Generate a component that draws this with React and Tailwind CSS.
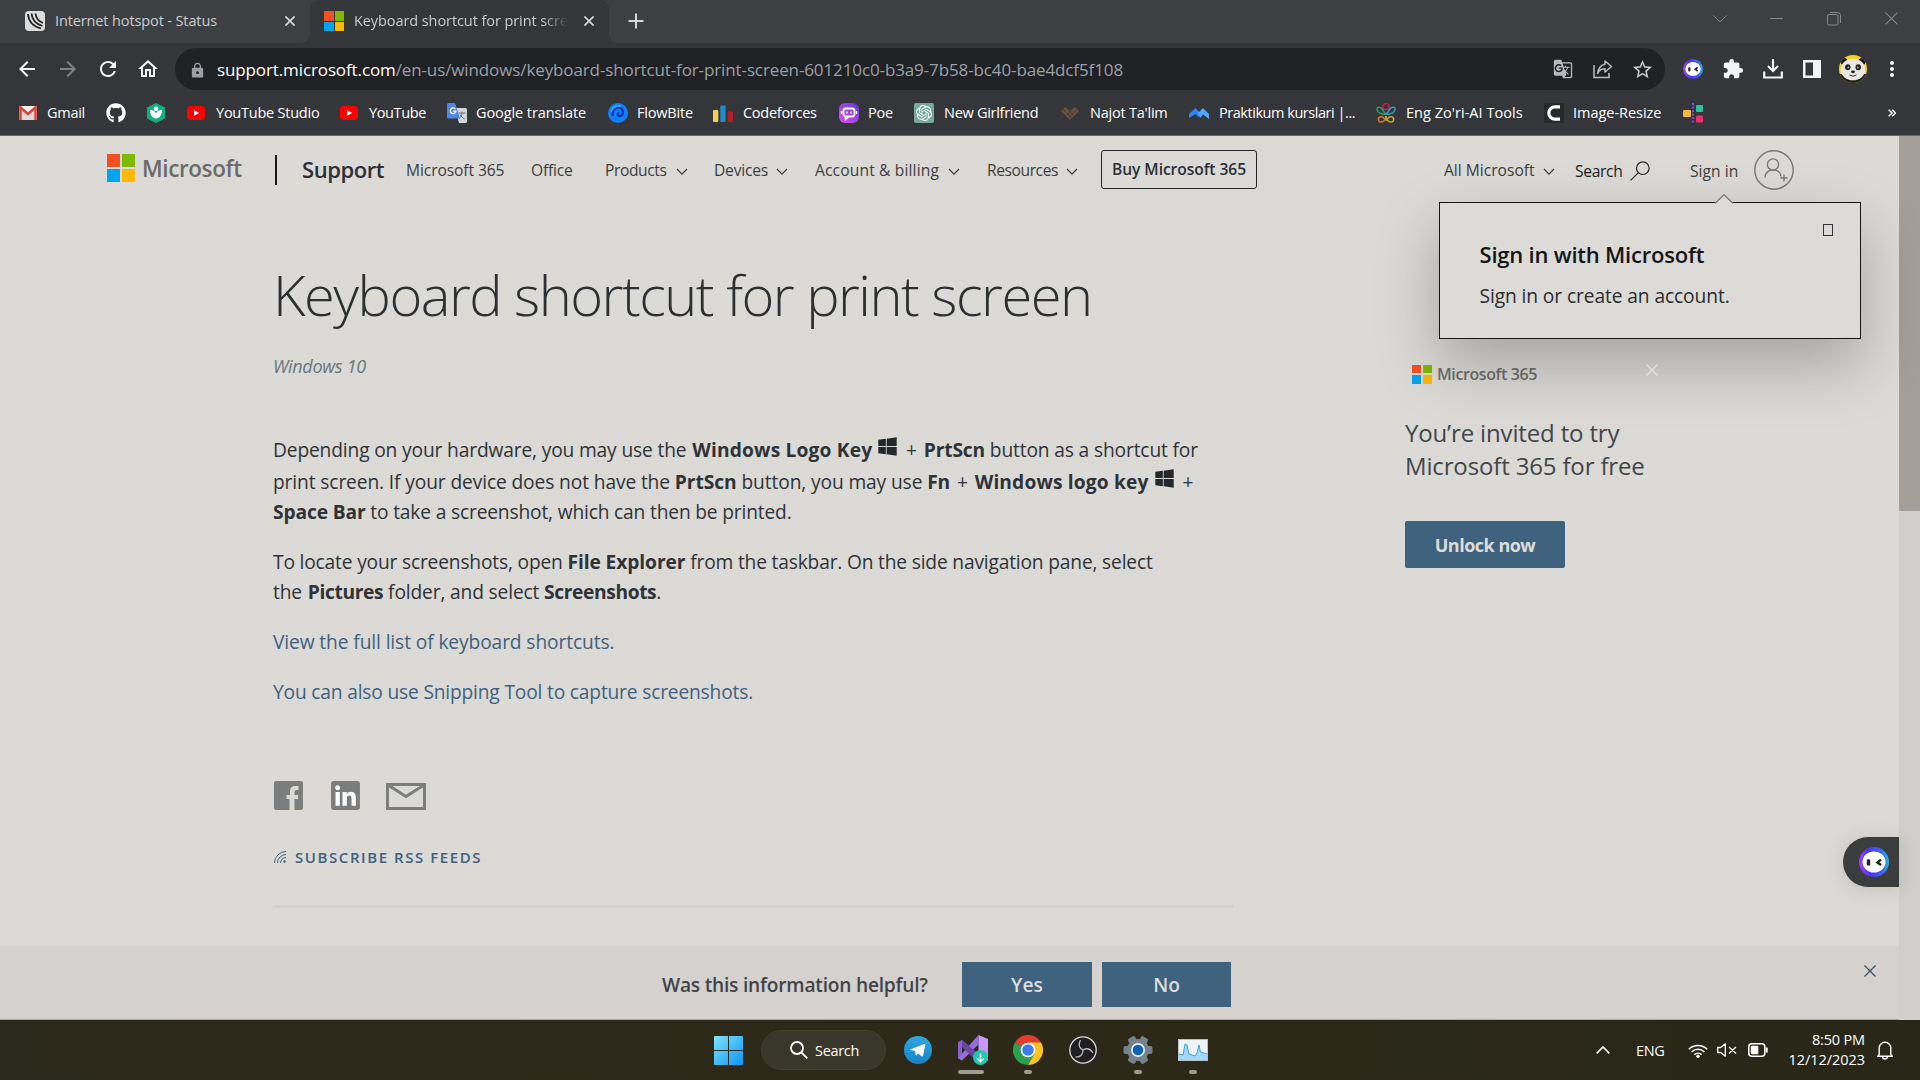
import React from "react";
import {
  MdArrowBack,
  MdArrowForward,
  MdRefresh,
  MdOutlineHome,
  MdLock,
  MdStarBorder,
  MdExtension,
  MdMoreVert,
  MdGTranslate,
} from "react-icons/md";
import { FaGithub, FaWindows, FaLinkedin } from "react-icons/fa";
import { SiOpenai } from "react-icons/si";

function Cross({ className, w = 1 }) {
  return (
    <svg viewBox="0 0 12 12" className={className} fill="none" stroke="currentColor" strokeWidth={w}>
      <path d="M.5 .5l11 11M11.5 .5l-11 11" />
    </svg>
  );
}

function Chevron({ className }) {
  return (
    <svg viewBox="0 0 12 8" className={className} fill="none" stroke="currentColor" strokeWidth="1.2">
      <path d="M1 1l5 5.2L11 1" />
    </svg>
  );
}

function MsSquares({ className }) {
  return (
    <div className={className}>
      <span className="bg-[#f4511f]" />
      <span className="bg-[#7fba00]" />
      <span className="bg-[#00a4ef]" />
      <span className="bg-[#ffb900]" />
    </div>
  );
}

function BotFace({ className, id }) {
  return (
    <svg viewBox="0 0 30 30" className={className}>
      <defs>
        <linearGradient id={id} x1="0" y1=".6" x2="1" y2=".5">
          <stop offset="0" stopColor="#a044f5" />
          <stop offset=".35" stopColor="#4a35f0" />
          <stop offset=".75" stopColor="#3b62f5" />
          <stop offset="1" stopColor="#25b4dc" />
        </linearGradient>
      </defs>
      <circle cx="15" cy="15" r="15" fill={`url(#${id})`} />
      <ellipse cx="15" cy="15" rx="11.5" ry="10.5" fill="#fff" />
      <rect x="7.8" y="12.2" width="3.4" height="6.4" rx="1.2" fill="#222" />
      <path d="M22 12.6l-3.6 2.8 3.6 2.6" fill="none" stroke="#222" strokeWidth="2.4" />
    </svg>
  );
}

/* ---------- Browser chrome ---------- */

function TabStrip() {
  return (
    <div className="flex h-[43px] bg-[#35363a] text-[14.5px] text-[#c9cbce]">
      <div className="flex h-full w-[310px] items-center rounded-br-[9px] bg-[#3c4043] pb-[1px] pl-[25px]">
        <svg viewBox="0 0 20 20" className="size-5">
          <rect width="20" height="20" rx="4" fill="#dcdcdc" />
          <path d="M3 3c.5 7 4 12 13 14.500M6.500 2.500c.5 6 3 10 11 12.500M10.500 2.500C11 7 12.500 10 18 12" fill="none" stroke="#222" strokeWidth="1.8" />
        </svg>
        <span className="ml-[10px] w-[230px] tracking-[-0.12px]">Internet hotspot - Status</span>
        <Cross className="size-[10px] text-[#d5d7da]" w={2} />
      </div>
      <div className="bg-[#3c4043]">
        <div className="flex h-full w-[299px] items-center rounded-t-[9px] bg-[#35363a] pb-[1px] pl-[14px]">
          <MsSquares className="grid size-5 grid-cols-2 gap-[1px]" />
          <span className="ml-[10px] w-[214px] overflow-hidden mask-r-from-[88%] mask-r-to-100% tracking-[-0.08px] whitespace-nowrap">
            Keyboard shortcut for print scre
          </span>
          <Cross className="ml-[16px] size-[10px] text-[#d5d7da]" w={2} />
        </div>
      </div>
      <div className="flex h-full grow items-center rounded-bl-[9px] bg-[#3c4043] pb-[1px] pl-[19px]">
        <svg viewBox="0 0 16 16" className="size-4 text-[#d5d7da]" stroke="currentColor" strokeWidth="2">
          <path d="M8 .5v15M.5 8h15" />
        </svg>
        <div className="ml-auto flex items-center pr-[22px] pb-[5px] text-[#85888b]">
          <svg viewBox="0 0 14 8" className="h-2 w-[14px]" fill="none" stroke="currentColor">
            <path d="M.5 .5L7 7 13.5 .5" />
          </svg>
          <span className="ml-[43px] h-px w-[13px] bg-current" />
          <svg viewBox="0 0 14 14" className="ml-[44px] size-[14px]" fill="none" stroke="currentColor">
            <rect x=".5" y="2.5" width="10.5" height="10.5" rx="1.5" />
            <path d="M3 .5h7.5a3 3 0 0 1 3 3V11" />
          </svg>
          <Cross className="ml-[44px] size-[13px]" />
        </div>
      </div>
    </div>
  );
}

function Panda() {
  return (
    <svg viewBox="0 0 28 28" className="size-7">
      <defs>
        <clipPath id="panda">
          <circle cx="14" cy="14" r="14" />
        </clipPath>
      </defs>
      <g clipPath="url(#panda)">
        <rect width="28" height="28" fill="#f7cf1d" />
        <rect y="19" width="28" height="9" fill="#20211f" />
        <circle cx="5" cy="6.500" r="3.500" fill="#1b1b1b" />
        <circle cx="23" cy="6.500" r="3.500" fill="#1b1b1b" />
        <ellipse cx="14" cy="14.500" rx="12.300" ry="10.800" fill="#e9e8e2" />
        <ellipse cx="8.800" cy="12.300" rx="2.700" ry="3" fill="#232323" />
        <ellipse cx="19.200" cy="12.300" rx="2.700" ry="3" fill="#232323" />
        <circle cx="9.300" cy="12.600" r="1" fill="#7fb58b" />
        <circle cx="18.700" cy="12.600" r="1" fill="#7fb58b" />
        <ellipse cx="14" cy="16.800" rx="2" ry="1.400" fill="#222" />
        <path d="M10.500 20q3.500 2.400 7 0" fill="none" stroke="#333" />
      </g>
    </svg>
  );
}

function Toolbar() {
  return (
    <div className="flex h-[52px] items-center bg-[#35363a] text-[#f1f3f4]">
      <MdArrowBack className="ml-[15px] size-6" />
      <MdArrowForward className="ml-[17px] size-6 text-[#7f8184]" />
      <MdRefresh className="ml-4 size-6" />
      <MdOutlineHome className="ml-4 size-6" />
      <div className="ml-[15px] flex h-[42px] w-[1490px] items-center rounded-full bg-[#202124] pl-[14px] text-[17px] text-[#9aa0a6]">
        <MdLock className="mt-[2px] size-[17px]" />
        <span className="mt-[2px] ml-[11px] grow tracking-[-0.115px]">
          <span className="text-white">support.microsoft.com</span>
          /en-us/windows/keyboard-shortcut-for-print-screen-601210c0-b3a9-7b58-bc40-bae4dcf5f108
        </span>
        <MdGTranslate className="size-5 text-[#b6b9bd]" />
        <svg viewBox="0 0 20 20" className="ml-5 size-5" fill="none" stroke="#b6b9bd" strokeWidth="1.6">
          <path d="M1 6v12.5h15V14" />
          <path d="M12 2l6.500 5.500L12 13v-3.200C8.500 9.800 6 11.500 4.700 14.500 5 9.500 8 5.700 12 5.200z" strokeLinejoin="round" />
        </svg>
        <MdStarBorder className="mr-[11px] ml-[18px] size-[23px] text-[#c6c9cc]" />
      </div>
      <BotFace id="botbar" className="ml-[18px] size-5" />
      <MdExtension className="ml-[19px] size-[22px]" />
      <svg viewBox="0 0 20 20" className="ml-[19px] size-5" fill="none" stroke="currentColor" strokeWidth="2.200">
        <path d="M10 0v11M5 7l5 5 5-5M1.200 12.500v6h17.600v-6" />
      </svg>
      <svg viewBox="0 0 18 18" className="ml-5 size-[18px]">
        <path fillRule="evenodd" d="M0 0h18v18H0zM2.500 2.500v13h7.500v-13z" fill="currentColor" />
      </svg>
      <span className="ml-[18px]">
        <Panda />
      </span>
      <MdMoreVert className="ml-[13px] size-6" />
    </div>
  );
}

function YouTube() {
  return (
    <svg viewBox="0 0 18 14" className="h-[14px] w-[18px]">
      <rect width="18" height="14" rx="3.500" fill="#f00" />
      <path d="M7 4.200L12.200 7 7 9.800z" fill="#fff" />
    </svg>
  );
}

const bookmarks = [
  {
    label: "Gmail",
    box: "w-[87px]",
    text: "-ml-[1px] tracking-[-0.27px]",
    icon: (
      <svg viewBox="0 0 18 14" className="h-[14px] w-[18px]">
        <rect width="18" height="14" rx="1" fill="#f1f1f1" />
        <path d="M3 14V5l6 4.500L15 5v9" fill="#dcdcdc" />
        <path d="M1.500 14V1.500L9 8l7.500-6.500V14" fill="none" stroke="#e0443a" strokeWidth="2.600" />
      </svg>
    ),
  },
  { label: "", box: "w-[41px]", text: "", icon: <FaGithub className="size-5 text-white" /> },
  {
    label: "",
    box: "w-[40px]",
    text: "",
    icon: (
      <svg viewBox="0 0 18 20" className="h-5 w-[18px]">
        <path d="M9 0l9 4.500v11L9 20 0 15.500v-11z" fill="#10b081" />
        <circle cx="9" cy="5.700" r="2.300" fill="#fff" />
        <path d="M3 7c3 0 5 1 6 3.500C10 8 12 7 15 7c0 5-2.500 8-6 8.500C5.500 15 3 12 3 7z" fill="#fff" />
      </svg>
    ),
  },
  { label: "YouTube Studio", box: "w-[153px]", text: "tracking-[-0.23px]", icon: <YouTube /> },
  { label: "YouTube", box: "w-[107px]", text: "tracking-[-0.38px]", icon: <YouTube /> },
  {
    label: "Google translate",
    box: "w-[161px]",
    text: "tracking-[-0.08px]",
    icon: (
      <svg viewBox="0 0 20 20" className="size-5">
        <path d="M8 5h10.500A1.500 1.500 0 0 1 20 6.500v12a1.500 1.500 0 0 1-1.500 1.500H12z" fill="#d3d5d8" />
        <path d="M11.500 10h7M15 8.500V10c0 2.500-1.500 4.500-3 5.500M13 11.500c.8 2 3 3.500 4.800 4.500" fill="none" stroke="#6c7780" />
        <path d="M1.500 0H8l5 15.500H1.500A1.500 1.500 0 0 1 0 14V1.500A1.500 1.500 0 0 1 1.500 0z" fill="#4f86ec" />
        <path d="M8.300 6a2.800 2.800 0 1 0 .6 2.200H6.300" fill="none" stroke="#fff" strokeWidth="1.300" />
      </svg>
    ),
  },
  {
    label: "FlowBite",
    box: "w-[105px]",
    text: "tracking-[-0.2px]",
    icon: (
      <svg viewBox="0 0 20 20" className="size-5">
        <circle cx="10" cy="10" r="10" fill="#1080f8" />
        <path d="M5 13c-2-6 4-10 8-7.500 3 2 2.500 7-1 7.500-2.500.3-3-2.500-1-3.500" fill="none" stroke="#1237b5" strokeWidth="2.400" />
        <path d="M3 9c1-5 6-7 10-6" fill="none" stroke="#35b0ff" strokeWidth="1.500" />
      </svg>
    ),
  },
  {
    label: "Codeforces",
    box: "w-[126px]",
    text: "ml-[1px] tracking-[-0.27px]",
    icon: (
      <svg viewBox="0 0 20 20" className="size-5">
        <rect y="7" width="5.300" height="12" rx="1" fill="#f7cf52" />
        <rect x="7.300" y="2.500" width="5.300" height="16.500" rx="1" fill="#1e8bcd" />
        <rect x="14.700" y="8.500" width="5.300" height="10.500" rx="1" fill="#b41f29" />
      </svg>
    ),
  },
  {
    label: "Poe",
    box: "w-[75px]",
    text: "tracking-[-0.27px]",
    icon: (
      <svg viewBox="0 0 20 20" className="size-5">
        <defs>
          <linearGradient id="poe" x1="0" y1="1" x2="1" y2="0">
            <stop offset="0" stopColor="#e64cf2" />
            <stop offset="1" stopColor="#5a3bd0" />
          </linearGradient>
        </defs>
        <rect width="20" height="20" rx="6" fill="url(#poe)" />
        <rect x="4.500" y="5.500" width="11" height="8" rx="2.500" fill="none" stroke="#fff" strokeWidth="1.800" />
        <path d="M2.500 8v3M17.500 8v3M8 8.500v2M12 8.500v2M6.500 14v2.500l3-2.500" stroke="#fff" strokeWidth="1.400" fill="none" />
      </svg>
    ),
  },
  {
    label: "New Girlfriend",
    box: "w-[146px]",
    text: "ml-[1px] tracking-[-0.28px]",
    icon: (
      <span className="flex size-5 items-center justify-center rounded-[2px] bg-[#74aa9c] text-white">
        <SiOpenai className="size-4" />
      </span>
    ),
  },
  {
    label: "Najot Ta'lim",
    box: "w-[129px]",
    text: "ml-[1px] tracking-[-0.23px]",
    icon: (
      <svg viewBox="0 0 20 20" className="size-5">
        <path d="M1 8l4-4 5 3.500L15 4l4 4-9 9z" fill="#6b5140" />
        <path d="M3 6l8.500 9M7 5.500l6.500 7M17 6l-8.500 9M13 5.500l-6.500 7" stroke="#3f3a38" strokeWidth=".9" />
      </svg>
    ),
  },
  {
    label: "Praktikum kurslari |...",
    box: "w-[187px]",
    text: "ml-[1px] tracking-[-0.46px]",
    icon: (
      <svg viewBox="0 0 20 20" className="size-5">
        <path d="M0 15V11l6.500-6 4 4.200V15L6.500 11z" fill="#2e86f5" />
        <path d="M9 10l5-5 6 6v5l-6-4.500-2.500 3.500z" fill="#51a5ff" />
      </svg>
    ),
  },
  {
    label: "Eng Zo'ri-AI Tools",
    box: "w-[168px]",
    text: "ml-[1px] tracking-[0.03px]",
    icon: (
      <svg viewBox="0 0 20 20" className="size-5" fill="none" strokeWidth="1.500">
        <ellipse cx="10" cy="3.600" rx="3.200" ry="3" stroke="#c4204b" />
        <path d="M10 11C7 12 1.500 10 1 6.500s4-2.500 5.500 0S8 10 10 11z" stroke="#2f9e6a" />
        <path d="M10 11c3 1 8.500-1 9-4.500s-4-2.500-5.500 0S12 10 10 11z" stroke="#2a9fc0" />
        <path d="M10 13c0 3-2 6-5 6s-3.500-4-1-5 3.500.5 6 3.500" stroke="#d9782a" />
        <path d="M10 13c0 3 2 6 5 6s3.500-4 1-5-3.500.5-6 3.500" stroke="#c8a72b" />
      </svg>
    ),
  },
  {
    label: "Image-Resize",
    box: "w-[139px]",
    text: "tracking-[-0.03px]",
    icon: (
      <svg viewBox="0 0 20 20" className="size-5">
        <rect width="20" height="20" fill="#292929" />
        <path d="M16 3.800h-5a6.200 6.200 0 0 0 0 12.400h5" fill="none" stroke="#fff" strokeWidth="3.200" />
      </svg>
    ),
  },
  {
    label: "",
    box: "w-[205px]",
    text: "",
    icon: (
      <svg viewBox="0 0 20 20" className="size-5">
        <rect y="7" width="8" height="7" rx="1" fill="#f5b73c" />
        <path d="M10 0v20" stroke="#6f4df0" strokeWidth="2" strokeDasharray="2 1.500" />
        <rect x="13" y="2" width="7" height="7" rx="1" fill="#27c4a0" />
        <rect x="13" y="12.500" width="7" height="7" rx="1" fill="#ee2f6e" />
      </svg>
    ),
  },
];

function Bookmarks() {
  return (
    <div className="flex h-[41px] items-center border-b border-[#67646a] bg-[#35363a] pb-[4px] pl-[19px] text-[14.5px] text-white">
      {bookmarks.map((b, i) => (
        <div key={i} className={`flex shrink-0 items-center gap-[9px] ${b.box}`}>
          <span className="flex w-5 shrink-0 items-center">{b.icon}</span>
          {b.label && <span className={`whitespace-nowrap ${b.text}`}>{b.label}</span>}
        </div>
      ))}
      <svg viewBox="0 0 8 8" className="size-2" fill="none" stroke="#fff" strokeWidth="1.500">
        <path d="M.7 .7L4 4 .7 7.300M4.200 .7L7.500 4 4.200 7.300" />
      </svg>
    </div>
  );
}

/* ---------- Site header ---------- */

function SiteHeader() {
  return (
    <header className="flex h-[68px] items-center pl-[107px] text-[15.6px] text-[#3d3d3f]">
      <MsSquares className="mb-1 grid size-7 grid-cols-2 gap-[1.5px]" />
      <span className="mb-[3px] ml-[7px] w-[133px] text-[22.5px] font-semibold tracking-[-0.4px] text-[#6b6b6b]">Microsoft</span>
      <span className="mr-[25px] h-[30px] w-[2px] bg-[#1c1c1c]" />
      <span className="mb-[2px] w-[104px] text-[22px] font-semibold tracking-[-0.44px] text-[#2c3036]">Support</span>
      <span className="mt-[2px] w-[125px] tracking-[-0.09px]">Microsoft 365</span>
      <span className="mt-[2px] w-[74px] tracking-[-0.23px]">Office</span>
      <span className="mt-[2px] flex w-[109px] items-center">
        <span className="w-[71px] tracking-[-0.39px]">Products</span>
        <Chevron className="mt-[3px] h-[8px] w-3" />
      </span>
      <span className="mt-[2px] flex w-[101px] items-center">
        <span className="w-[62px] tracking-[-0.21px]">Devices</span>
        <Chevron className="mt-[3px] h-[8px] w-3" />
      </span>
      <span className="mt-[2px] flex w-[172px] items-center">
        <span className="w-[133px] tracking-[0.14px]">Account &amp; billing</span>
        <Chevron className="mt-[3px] h-[8px] w-3" />
      </span>
      <span className="mt-[2px] flex w-[114px] items-center">
        <span className="w-[79px] tracking-[-0.42px]">Resources</span>
        <Chevron className="mt-[3px] h-[8px] w-3" />
      </span>
      <span className="mb-[1px] flex h-[39px] w-[156px] items-center justify-center rounded-[3px] border border-[#26282c] pt-[1px] font-semibold tracking-[-0.06px] text-[#2c3036]">
        Buy Microsoft 365
      </span>
      <span className="mt-[2px] ml-[187px] flex w-[131px] items-center">
        <span className="w-[99px]">All Microsoft</span>
        <Chevron className="mt-[3px] h-[8px] w-3" />
      </span>
      <span className="mt-[4px] w-[55px] tracking-[-0.32px] text-[#1d1d1f]">Search</span>
      <svg viewBox="0 0 20 20" className="mt-[1px] size-5" fill="none" stroke="#26282c" strokeWidth="1.200">
        <circle cx="12.800" cy="7.200" r="6.300" />
        <path d="M8.200 11.800L.6 19.400" />
      </svg>
      <span className="mt-[4px] ml-[40px] w-[64px] tracking-[0.05px]">Sign in</span>
      <svg viewBox="0 0 40 40" className="size-10" fill="none" stroke="#77787a" strokeWidth="1.400">
        <circle cx="20" cy="20" r="19.200" />
        <circle cx="19" cy="14.500" r="5.600" />
        <path d="M11 27.500c0-10 16-10 16-1M30 24.500v7M26.500 28h7" />
      </svg>
    </header>
  );
}

function SignInPopup() {
  return (
    <div className="absolute top-[66px] left-[1439px] h-[137px] w-[422px] border border-[#161616] bg-[#dcdbd7] pt-[39px] pl-[39.5px] shadow-[0_26px_62px_rgba(0,0,0,0.25)]">
      <svg viewBox="0 0 20 10" className="absolute -top-[9px] left-[274px] h-[10px] w-5">
        <path d="M1 9.500L10 .8l9 8.700z" fill="#dcdbd7" />
        <path d="M1 9.200L10 .8l9 8.400" fill="none" stroke="#77787a" strokeWidth="1.300" />
      </svg>
      <span className="absolute top-[21px] right-[27px] h-3 w-[10px] border border-[#33343a]" />
      <div className="h-[24px] text-[22px] leading-6 font-semibold tracking-[-0.22px] text-[#161618]">Sign in with Microsoft</div>
      <div className="mt-[18px] text-[19.2px] leading-6 tracking-[-0.1px] text-[#2b2c30]">Sign in or create an account.</div>
    </div>
  );
}

/* ---------- Article ---------- */

function WinKey() {
  return <FaWindows className="mr-[1px] mb-[10px] ml-[5px] inline-block size-[21px] align-middle text-[#24272b]" />;
}

function Plus() {
  return <span className="mx-[2px]">+</span>;
}

function Article() {
  return (
    <article className="w-[960px] pt-[55px] text-[19.2px] whitespace-nowrap text-[#2f3338]">
      <h1 className="h-[70px] text-[56px] leading-[70px] font-light tracking-[-1.49px] text-[#2c3033]">
        Keyboard shortcut for print screen
      </h1>
      <div className="mt-[24px] h-[26px] text-[18px] leading-[26px] tracking-[-0.3px] text-[#6b7780] italic">Windows 10</div>
      <div className="mt-[56px] leading-[30px]">
        <div className="h-8 tracking-[-0.15px]">
          Depending on your hardware, you may use the{" "}
          <b className="ml-[1px] font-bold tracking-[0.16px]">Windows Logo Key</b>
          <WinKey /> <Plus /> <b className="font-bold tracking-[-0.15px]">PrtScn</b> button as a shortcut for
        </div>
        <div className="h-[30px] tracking-[-0.12px]">
          print screen. If your device does not have the <b className="font-bold tracking-[-0.05px]">PrtScn</b> button, you may use{" "}
          <b className="font-bold">Fn</b> <Plus /> <b className="font-bold tracking-[0.14px]">Windows logo key</b>
          <WinKey /> <Plus />
        </div>
        <div className="h-[30px] tracking-[-0.17px]">
          <b className="font-bold tracking-[-0.13px]">Space Bar</b> to take a screenshot, which can then be printed.
        </div>
        <div className="mt-5 h-[30px] tracking-[-0.18px]">
          To locate your screenshots, open <b className="font-bold tracking-[-0.08px]">File Explorer</b> from the taskbar. On the side
          navigation pane, select
        </div>
        <div className="h-[30px] tracking-[-0.15px]">
          the <b className="ml-[1px] font-bold tracking-[-0.35px]">Pictures</b> folder, and select{" "}
          <b className="font-bold tracking-[-0.38px]">Screenshots</b>.
        </div>
        <div className="mt-5 h-[30px] tracking-[-0.11px] text-[#42617f]">View the full list of keyboard shortcuts.</div>
        <div className="mt-5 h-[30px] tracking-[-0.18px] text-[#42617f]">
          You can also use Snipping Tool to capture screenshots.
        </div>
      </div>
      <div className="mt-[74px] flex h-[29px] items-center pl-[1px] text-[#7c7e7d]">
        <svg viewBox="0 0 29 29" className="size-[29px]">
          <path
            fill="currentColor"
            d="M2 0h25q2 0 2 2v25q0 2-2 2h-6.500V18h3.500v-4h-3.500v-3q0-2 2-2h2V5h-3.500q-5 0-5 5.500V14h-3.500v4H15.500v11H2q-2 0-2-2V2q0-2 2-2z"
          />
        </svg>
        <span className="ml-[28px] flex h-[29px] w-[29px] items-center justify-center overflow-hidden rounded-[2px] bg-[linear-gradient(#fff,#fff)] bg-[length:23px_23px] bg-center bg-no-repeat">
          <FaLinkedin className="size-[33px] shrink-0" />
        </span>
        <svg viewBox="0 0 40 27" className="mt-[2px] ml-[26px] h-[27px] w-10" fill="none" stroke="currentColor" strokeWidth="3">
          <path d="M1.500 1.500h37v24h-37z" />
          <path d="M2 2l18 11.500L38 2" />
        </svg>
      </div>
      <div className="mt-[37px] flex h-5 items-center text-[15px] font-semibold tracking-[1.57px] text-[#42617f]">
        <svg viewBox="0 0 12 12" className="mr-[9px] ml-[1px] size-3" fill="none" stroke="currentColor">
          <path d="M.5 12A11.500 11.500 0 0 1 12 .5M3.500 12A8.500 8.500 0 0 1 12 3.500M6.500 12A5.500 5.500 0 0 1 12 6.500" />
          <circle cx="10.500" cy="10.500" r="1.200" fill="currentColor" stroke="none" />
        </svg>
        SUBSCRIBE RSS FEEDS
      </div>
      <div className="mt-[38px] h-[3px] bg-[#d1d0cc]" />
    </article>
  );
}

function Promo() {
  return (
    <aside className="ml-[172px] pt-[160px]">
      <div className="flex h-5 w-[253px] items-center pl-[7px]">
        <MsSquares className="grid h-[19px] w-5 grid-cols-2 gap-[1.5px]" />
        <span className="ml-[5px] text-[16px] font-semibold tracking-[-0.4px] text-[#6e6e6d]">Microsoft 365</span>
        <Cross className="mb-[8px] ml-auto size-[12px] text-white" w={1.2} />
      </div>
      <div className="mt-[32px] text-[24px] leading-[33px] tracking-[-0.15px] text-[#43474b]">
        You’re invited to try
        <br />
        Microsoft 365 for free
      </div>
      <div className="mt-[39px] flex h-[47px] w-[160px] items-center justify-center rounded-[2px] bg-[#3f627f] pt-[2px] text-[18px] font-bold tracking-[-0.5px] text-[#dddcd9]">
        Unlock now
      </div>
    </aside>
  );
}

function HelpfulBar() {
  return (
    <div className="flex h-[73px] items-center bg-[#d4d1ce] pt-[4px] pl-[662px] text-[19.2px] font-semibold text-[#414449]">
      <span className="w-[300px] pt-[2px] tracking-[-0.23px]">Was this information helpful?</span>
      <span className="flex h-[45px] w-[130px] items-center justify-center bg-[#3f627f] pt-[2px] text-[#dddcd9]">Yes</span>
      <span className="ml-[10px] flex h-[45px] w-[129px] items-center justify-center bg-[#3f627f] pt-[2px] text-[#dddcd9]">No</span>
      <Cross className="mr-[23px] mb-[27px] ml-auto size-3 text-[#3c5068]" w={1.3} />
    </div>
  );
}

/* ---------- Taskbar ---------- */

function VsIcon() {
  return (
    <svg viewBox="0 0 30 30" className="size-[30px]">
      <path d="M0 7.500L4 5l15 13v8.500L14 21z" fill="#7a4fb5" />
      <path d="M0 7.500L4 5v20.500l-4-2.500z" fill="#8a5fcb" />
      <path d="M0 23L20.500 0v9.500L4 25.500z" fill="#9a6be0" />
      <path d="M4 5l16.500 14v9L4 12z" fill="#6b45a3" />
      <path d="M20.500 0L30 4v21.500L20.500 29z" fill="#c797fb" />
      <circle cx="22.500" cy="22.500" r="7.500" fill="#1fc7b0" />
      <path d="M22.500 18.500v8M19.300 23.500l3.200 3.200 3.200-3.200" fill="none" stroke="#fff" strokeWidth="1.400" />
    </svg>
  );
}

function ChromeIcon() {
  return (
    <svg viewBox="0 0 30 30" className="size-[30px]">
      <path d="M15 15L2 7.500A15 15 0 0 1 28 7.500z" fill="#e33b2e" />
      <path d="M15 15l6.500 3.800L15 30A15 15 0 0 1 2 7.500z" fill="#2da04c" />
      <path d="M15 7.500h13A15 15 0 0 1 15 30l6.500-11.200z" fill="#fcc31e" />
      <circle cx="15" cy="15" r="7.300" fill="#fff" />
      <circle cx="15" cy="15" r="5.800" fill="#3a7df0" />
    </svg>
  );
}

function ObsIcon() {
  return (
    <svg viewBox="0 0 28 28" className="size-7" fill="none" stroke="#bdbbc0" strokeWidth="1.300">
      <circle cx="14" cy="14" r="13.200" fill="#1f1e21" stroke="#dcdadd" />
      <path d="M14 14C10.500 12 9 8.500 11.500 4" />
      <path d="M14 14C10.500 12 9 8.500 11.500 4" transform="rotate(120 14 14)" />
      <path d="M14 14C10.500 12 9 8.500 11.500 4" transform="rotate(240 14 14)" />
    </svg>
  );
}

const apps = [
  {
    gap: "ml-[18px]",
    mark: "",
    icon: (
      <svg viewBox="0 0 28 28" className="size-7">
        <defs>
          <linearGradient id="tg" x1="0" y1="0" x2="0" y2="1">
            <stop offset="0" stopColor="#2fa8e2" />
            <stop offset="1" stopColor="#1583c4" />
          </linearGradient>
        </defs>
        <circle cx="14" cy="14" r="14" fill="url(#tg)" />
        <path d="M5.500 13.800L20.500 8q1-.2.800 1L19 19.800q-.4 1-1.400.4l-3.400-2.600-1.800 1.800q-.6.300-.7-.4l-.5-3.900z" fill="#fff" />
      </svg>
    ),
  },
  { gap: "ml-[26px]", mark: "w-[26px] mr-1", icon: <VsIcon /> },
  { gap: "ml-[25px]", mark: "w-2", icon: <ChromeIcon /> },
  { gap: "ml-[26px]", mark: "", icon: <ObsIcon /> },
  {
    gap: "ml-[26px]",
    mark: "w-2",
    icon: (
      <svg viewBox="0 0 30 30" className="size-[30px]">
        <g fill="#77818b">
          <circle cx="15" cy="15" r="11" />
          <rect x="11" y="0.500" width="8" height="29" rx="2" transform="rotate(30 15 15)" />
          <rect x="11" y="0.500" width="8" height="29" rx="2" transform="rotate(90 15 15)" />
          <rect x="11" y="0.500" width="8" height="29" rx="2" transform="rotate(150 15 15)" />
        </g>
        <circle cx="15" cy="15" r="7" fill="#e8edf2" />
        <circle cx="15" cy="15" r="5.300" fill="#0f63b5" />
      </svg>
    ),
  },
  {
    gap: "ml-[25px]",
    mark: "w-2",
    icon: (
      <svg viewBox="0 0 30 22" className="h-[22px] w-[30px]">
        <rect x=".5" y=".5" width="29" height="21" fill="#eef3f8" stroke="#b9c0c8" />
        <path d="M1 15l4 1 2-11 2 1 2 9 3 1 3 1 2-3 2-8 1.500 7 3 1 3.500 1v6H1z" fill="#9fd8f8" />
        <path d="M1 15l4 1 2-11 2 1 2 9 3 1 3 1 2-3 2-8 1.500 7 3 1 3.500 1" fill="none" stroke="#4a9fd2" />
      </svg>
    ),
  },
];

function Taskbar() {
  return (
    <div className="flex h-[60px] items-center bg-linear-to-r from-[#2c2a1c] via-[#2d2919] to-[#282718] pl-[714px] text-[14.5px] text-white">
      <svg viewBox="0 0 29 29" className="size-[29px]">
        <defs>
          <linearGradient id="start" x1="0" y1="0" x2="1" y2="1">
            <stop offset="0" stopColor="#7be6fd" />
            <stop offset="1" stopColor="#0f93f7" />
          </linearGradient>
        </defs>
        <path d="M0 1q0-1 1-1h13v14H0zM15 0h13q1 0 1 1v13H15zM0 15h14v14H1q-1 0-1-1zM15 15h14v13q0 1-1 1H15z" fill="url(#start)" />
      </svg>
      <div className="ml-[18px] flex h-10 w-[125px] items-center rounded-full border border-[#403e30] bg-[#393729] pl-[28px]">
        <svg viewBox="0 0 18 18" className="size-[18px]" fill="none" stroke="#fff" strokeWidth="1.800">
          <circle cx="7" cy="7" r="6" />
          <path d="M11.300 11.300l6 6" />
        </svg>
        <span className="mt-[1px] ml-[7px] tracking-[-0.32px]">Search</span>
      </div>
      {apps.map((a, i) => (
        <div key={i} className={`relative flex h-[60px] items-center ${a.gap}`}>
          {a.icon}
          {a.mark && (
            <span className="absolute inset-x-0 bottom-[6px] flex justify-center">
              <span className={`h-1 rounded-full bg-[#9d9b92] ${a.mark}`} />
            </span>
          )}
        </div>
      ))}
      <svg viewBox="0 0 14 8" className="ml-auto h-2 w-[14px]" fill="none" stroke="#fff" strokeWidth="1.700">
        <path d="M.7 7.300L7 1l6.300 6.300" />
      </svg>
      <span className="mt-[1px] ml-[26px] w-[52px] tracking-[-0.3px]">ENG</span>
      <svg viewBox="0 0 20 15" className="h-[15px] w-5" fill="none" stroke="#fff" strokeWidth="1.500">
        <path d="M.8 6.200a13 13 0 0 1 18.400 0M3.600 9a9 9 0 0 1 12.800 0M6.400 11.600a5.200 5.200 0 0 1 7.200 0" />
        <circle cx="10" cy="13.200" r="1.700" fill="#fff" stroke="none" />
      </svg>
      <svg viewBox="0 0 20 14" className="ml-[9px] h-[14px] w-5" fill="none" stroke="#fff" strokeWidth="1.300">
        <path d="M.7 4.500h3L8.300 .8v12.400L3.700 9.500h-3zM12 4l7 6.500M19 4l-7 6.500" strokeLinejoin="round" />
      </svg>
      <svg viewBox="0 0 20 14" className="ml-[11px] h-[14px] w-5" fill="none" stroke="#fff" strokeWidth="1.500">
        <rect x=".8" y=".8" width="16" height="12.400" rx="3" />
        <rect x="2.800" y="2.800" width="7.500" height="8.400" rx="1" fill="#fff" stroke="none" />
        <path d="M18.700 4.500v5" strokeWidth="2" />
      </svg>
      <div className="w-[97px] text-right leading-5">
        <div className="tracking-[-0.17px]">8:50 PM</div>
        <div className="tracking-[-0.05px]">12/12/2023</div>
      </div>
      <svg viewBox="0 0 16 19" className="mr-[27px] ml-[12px] h-[19px] w-4" fill="none" stroke="#fff" strokeWidth="1.400">
        <path d="M2.200 13.500V7a5.800 5.800 0 0 1 11.600 0v6.500l1.500 1.700H.7zM5.500 15.500a2.500 2.500 0 0 0 5 0" strokeLinejoin="round" />
      </svg>
    </div>
  );
}

export default function App() {
  return (
    <div className="flex h-[1080px] w-[1920px] flex-col overflow-hidden bg-[#dbdad6] font-['Open_Sans',sans-serif]">
      <TabStrip />
      <Toolbar />
      <Bookmarks />
      <div className="flex h-[884px]">
        <div className="relative flex w-[1899px] flex-col border-b border-[#a9a8a0]">
          <SiteHeader />
          <main className="flex h-[742px] pl-[273px]">
            <Article />
            <Promo />
          </main>
          <HelpfulBar />
          <SignInPopup />
          <div className="absolute top-[701px] right-0 flex h-[50px] w-[56px] items-center rounded-l-full bg-[#3b3c3e] pl-[16px] shadow-[0_2px_20px_rgba(0,0,0,0.12)]">
            <BotFace id="botpill" className="size-[30px]" />
          </div>
        </div>
        <div className="w-[21px] bg-[#d0cfcb]">
          <div className="h-[375px] bg-[#a39e97]" />
        </div>
      </div>
      <Taskbar />
    </div>
  );
}
